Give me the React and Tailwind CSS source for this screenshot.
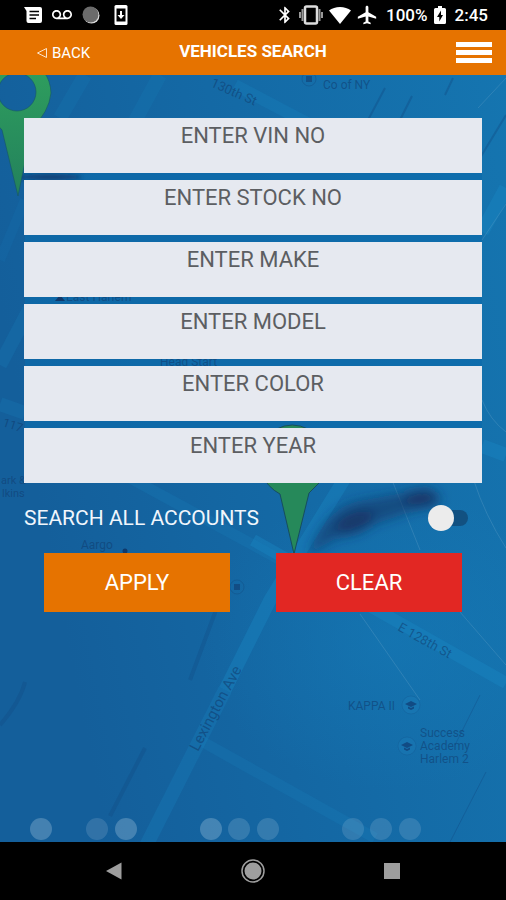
import { useState } from 'react'
import { MdVoicemail, MdBluetooth, MdVibration, MdAirplanemodeActive } from 'react-icons/md'

const FIELDS = [
  { key: 'vin', label: 'ENTER VIN NO' },
  { key: 'stock', label: 'ENTER STOCK NO' },
  { key: 'make', label: 'ENTER MAKE' },
  { key: 'model', label: 'ENTER MODEL' },
  { key: 'color', label: 'ENTER COLOR' },
  { key: 'year', label: 'ENTER YEAR' },
]

const EMPTY = { vin: '', stock: '', make: '', model: '', color: '', year: '' }

// cx + opacity of the faded dots along the bottom of the map
const DOTS = [
  [41, 0.25], [97, 0.15], [126, 0.25], [211, 0.25], [239, 0.17],
  [268, 0.17], [353, 0.15], [381, 0.15], [410, 0.15],
]

function StatusBar() {
  return (
    <div className="flex h-[30px] items-center justify-between bg-black pl-6 pr-[18px] text-white">
      <div className="flex items-center gap-[10px]">
        <svg viewBox="0 0 18 16" className="h-4 w-[18px]">
          <path fill="#fff" d="M0 0h16a2 2 0 0 1 2 2v12a2 2 0 0 1-2 2H4.500a2 2 0 0 1-2-2V4z"/>
          <path stroke="#000" strokeWidth="1.500" d="M5.500 4.600h9.500M5.500 8h9.500M5.500 11.400h6.500"/>
        </svg>
        <MdVoicemail className="h-5 w-5"/>
        <svg viewBox="0 0 18 18" className="h-[18px] w-[18px]">
          <circle cx="9.500" cy="9.500" r="8" fill="#ddd"/>
          <circle cx="8.500" cy="8.500" r="8" fill="#6b6b6b"/>
        </svg>
        <svg viewBox="0 0 14 20" className="ml-1 h-5 w-[14px]">
          <rect x="0.500" width="13" height="20" rx="1.500" fill="#fff"/>
          <rect x="2.500" y="3.500" width="9" height="13" fill="#000"/>
          <path fill="#fff" d="M6 6h2v4h2.500L7 14l-3.500-4H6z"/>
        </svg>
      </div>
      <div className="flex items-center">
        <MdBluetooth className="h-5 w-5"/>
        <svg viewBox="0 0 24 20" className="ml-1 h-5 w-6">
          <rect x="6" y="1.500" width="12" height="17" rx="1.500" fill="none" stroke="#ddd" strokeWidth="2.500"/>
          <path d="M3.500 4v12M20.500 4v12M1 7v6M23 7v6" stroke="#999" strokeWidth="2"/>
        </svg>
        <svg viewBox="0 0 22 17" className="ml-[6px] h-[17px] w-[22px]">
          <path fill="#fff" d="M11 17 0 3.500C3 1.200 6.800 0 11 0s8 1.200 11 3.500z"/>
        </svg>
        <MdAirplanemodeActive className="ml-[5px] h-[22px] w-[22px]"/>
        <span className="ml-2 text-[17px] font-medium leading-5">100%</span>
        <svg viewBox="0 0 12 18" className="ml-[6px] h-[18px] w-3">
          <path fill="#fff" d="M4 0h4v2h2.500A1.500 1.500 0 0 1 12 3.500v13a1.500 1.500 0 0 1-1.500 1.500h-9A1.500 1.500 0 0 1 0 16.500v-13A1.500 1.500 0 0 1 1.500 2H4z"/>
          <path fill="#000" d="M7 4.500 3 11h2.300v4.500L9 9H7z"/>
        </svg>
        <span className="ml-[9px] text-[17px] font-medium leading-5">2:45</span>
      </div>
    </div>
  )
}

function Header() {
  return (
    <header className="relative z-10 grid h-[45px] grid-cols-[1fr_auto_1fr] items-center bg-[#e67300] px-[14px] text-white">
      <button className="ml-[22px] flex items-center gap-1 justify-self-start text-[15px] leading-5">
        <svg viewBox="0 0 12 12" className="h-3 w-3">
          <path d="M10.500 1.500v9L1.500 6z" fill="none" stroke="#fff" strokeOpacity="0.800"/>
        </svg>
        BACK
      </button>
      <h1 className="pb-1 text-[17px] font-bold leading-5">VEHICLES SEARCH</h1>
      <button aria-label="Menu" className="flex w-9 flex-col gap-[3px] justify-self-end">
        <span className="h-[5px] bg-white"/>
        <span className="h-[5px] bg-white"/>
        <span className="h-[5px] bg-white"/>
      </button>
    </header>
  )
}

function School({ x, y }) {
  return (
    <g transform={`translate(${x} ${y})`}>
      <circle r="9" fill="#1c7fbb" fillOpacity="0.350" stroke="#124f86" strokeOpacity="0.250"/>
      <path d="M-6-1 0-4 6-1 0 2zM-3 1.500v2L0 5l3-1.500v-2L0 3z" fill="#10447c" fillOpacity="0.850"/>
    </g>
  )
}

function MapBackground() {
  return (
    <svg viewBox="0 75 506 767" preserveAspectRatio="xMidYMid slice" aria-hidden="true" className="absolute inset-0 h-full w-full">
      <defs>
        <linearGradient id="sea" x1="0" y1="0.300" x2="1" y2="0">
          <stop offset="0" stopColor="#145f9b"/>
          <stop offset="0.500" stopColor="#146aa6"/>
          <stop offset="1" stopColor="#1575b0"/>
        </linearGradient>
        <linearGradient id="pin" x1="0" y1="0" x2="0" y2="1">
          <stop offset="0" stopColor="#2fa05e"/>
          <stop offset="1" stopColor="#23815c"/>
        </linearGradient>
        <radialGradient id="glow">
          <stop offset="0" stopColor="#1580bd" stopOpacity="0.400"/>
          <stop offset="1" stopColor="#1580bd" stopOpacity="0"/>
        </radialGradient>
        <filter id="soft" x="-40%" y="-120%" width="180%" height="340%">
          <feGaussianBlur stdDeviation="6"/>
        </filter>
        <filter id="haze" x="-30%" y="-100%" width="160%" height="300%">
          <feGaussianBlur stdDeviation="2"/>
        </filter>
      </defs>
      <rect y="75" width="506" height="767" fill="url(#sea)"/>
      <ellipse cx="390" cy="640" rx="190" ry="150" fill="url(#glow)"/>
      <rect x="25" y="160" width="457" height="290" fill="#0c6bab" fillOpacity="0.700"/>

      {/* streets */}
      <g fill="none" stroke="#1886c3" strokeOpacity="0.400">
        <path strokeWidth="13" d="M345 478 270 600 225 690"/>
        <path strokeWidth="14" d="M225 690 145 848" strokeOpacity="0.280"/>
        <path strokeWidth="12" d="M253 540 506 683"/>
        <path strokeWidth="11" d="M203 742 375 838M130 478 290 565" strokeOpacity="0.200"/>
        <path strokeWidth="14" d="M506 188 482 232M482 446l24 9"/>
        <path strokeWidth="14" d="M160 75 130 130M85 75 60 118" strokeOpacity="0.160"/>
        <path strokeWidth="12" d="M235 85 330 135" strokeOpacity="0.250"/>
        <path strokeWidth="14" d="M30 308 0 365M0 404l25 9" strokeOpacity="0.200"/>
        <path strokeWidth="10" d="M0 260 25 200" strokeOpacity="0.120"/>
      </g>
      <g fill="none" stroke="#123f78" strokeOpacity="0.300" strokeWidth="2">
        <path d="M385 88 368 120M412 96 400 120M453 78 445 95M506 115 480 158"/>
        <path strokeWidth="4" d="M25 682Q20 702 0 725M145 748 110 816M216 610 190 680" strokeOpacity="0.220"/>
        <path strokeWidth="1" d="M486 772 450 842M480 695 455 745"/>
      </g>
      <g fill="none" stroke="#5f9fc6" strokeOpacity="0.350">
        <path d="M506 78 478 108M506 204 482 240M474 481Q485 515 506 548M460 612 506 665M392 480 420 550M360 614 420 700M482 400Q490 420 506 432"/>
      </g>

      {/* pin shadows */}
      <g filter="url(#soft)" fill="#16305f">
        <path d="M308 556Q325 505 365 500L430 488 438 500Q405 515 370 525T308 556z" fillOpacity="0.550"/>
        <ellipse cx="355" cy="523" rx="20" ry="10" transform="rotate(-22 355 523)" fillOpacity="0.700"/>
        <ellipse cx="422" cy="499" rx="18" ry="9" fillOpacity="0.700"/>
      </g>
      <ellipse cx="50" cy="177" rx="32" ry="3" fill="#12305f" fillOpacity="0.700" filter="url(#haze)"/>

      {/* pins */}
      <path fillRule="evenodd" fill="url(#pin)" stroke="#155566" strokeOpacity="0.600" d="M18 196 2 130Q-20 110-14 85 0 55 25 60 50 68 51 93 49 112 32 128zM17 73A19 19 0 1 0 17 111 19 19 0 1 0 17 73z"/>
      <path fill="#26895a" stroke="#174e5e" d="M294 554 280 494Q268 488 260 472A35 40 0 0 1 260 442Q292 408 325 442A35 40 0 0 1 324 478L309 493z"/>

      {/* place names */}
      <g fill="#10396b" fillOpacity="0.550" className="font-[Roboto,sans-serif] text-[12px]">
        <text transform="translate(210 86) rotate(24)" className="text-[13px]">130th St</text>
        <text x="323" y="89">Co of NY</text>
        <text x="160" y="366">Head Start</text>
        <text x="66" y="301">East Harlem</text>
        <text transform="translate(2 426) rotate(18)">117</text>
        <text x="1" y="484" className="text-[11px]">ark &amp;</text>
        <text x="2" y="497" className="text-[11px]">lkins</text>
        <text x="81" y="549">Aargo</text>
        <text transform="translate(397 630) rotate(29)" className="text-[13px]">E 128th St</text>
        <text transform="translate(198 752) rotate(-62)" className="text-[15px]">Lexington Ave</text>
        <text x="348" y="710">KAPPA II</text>
        <text x="420" y="737">Success</text>
        <text x="420" y="750">Academy</text>
        <text x="420" y="763">Harlem 2</text>
      </g>
      <circle cx="125" cy="551" r="2.500" fill="#10396b"/>
      <path d="M55 301 60 295l5 6z" fill="#10396b"/>
      <g stroke="#124f86" strokeOpacity="0.500" fill="none">
        <circle cx="309" cy="79" r="7"/>
        <circle cx="237" cy="587" r="7"/>
      </g>
      <path d="M306 76h6v6h-6zM234 584h6v6h-6z" fill="#10396b" fillOpacity="0.550"/>
      <School x={411} y={705}/>
      <School x={407} y={746}/>

      {DOTS.map(([cx, opacity])=>(
        <circle key={cx} cx={cx} cy="829" r="11" fill="#d5e6f2" fillOpacity={opacity}/>
      ))}
    </svg>
  )
}

function NavBar() {
  return (
    <nav className="relative z-10 grid h-[58px] grid-cols-3 items-center bg-black px-11 text-[#9e9e9e]">
      <button aria-label="Back" className="justify-self-center">
        <svg viewBox="0 0 16 18" className="h-[18px] w-4">
          <path d="M15.500 0.500v17L0 9z" fill="currentColor"/>
        </svg>
      </button>
      <button aria-label="Home" className="justify-self-center">
        <svg viewBox="0 0 24 24" className="h-6 w-6">
          <circle cx="12" cy="12" r="11" fill="none" stroke="currentColor" strokeWidth="1.500"/>
          <circle cx="12" cy="12" r="8.500" fill="currentColor"/>
        </svg>
      </button>
      <button aria-label="Recent apps" className="h-4 w-4 justify-self-center bg-[#9e9e9e]"/>
    </nav>
  )
}

export default function App() {
  const [values, setValues] = useState(EMPTY)
  const [allAccounts, setAllAccounts] = useState(false)

  function handleClear() {
    setValues(EMPTY)
    setAllAccounts(false)
  }

  return (
    <div className="flex min-h-screen flex-col font-[Roboto,sans-serif]">
      <StatusBar/>
      <Header/>
      <main className="relative flex-1 overflow-hidden bg-[#146aa6]">
        <MapBackground/>
        <form onSubmit={e=>e.preventDefault()} className="relative px-6 pb-10 pt-[43px]">
          <div className="flex flex-col gap-[7px]">
            {FIELDS.map(f=>(
              <input key={f.key} type="text" aria-label={f.label} placeholder={f.label}
                value={values[f.key]}
                onChange={e=>setValues({ ...values, [f.key]: e.target.value })}
                className="h-[55px] w-full bg-[#e6e9f0] pb-5 text-center text-[22px] text-gray-800 outline-none placeholder:text-[#5c5e62]"/>
            ))}
          </div>

          <label className="mt-[22px] flex items-center justify-between pr-[14px] text-[21px] leading-[26px] text-[#f0f6fc]">
            SEARCH ALL ACCOUNTS
            <input type="checkbox" role="switch" checked={allAccounts}
              onChange={e=>setAllAccounts(e.target.checked)}
              className="flex h-4 w-10 appearance-none items-center rounded-full bg-[#125181] before:h-[26px] before:w-[26px] before:shrink-0 before:rounded-full before:bg-[#ececec] checked:justify-end"/>
          </label>

          <div className="mt-[22px] grid grid-cols-2 gap-[46px] px-5">
            <button type="submit" className="h-[59px] bg-[#e67300] text-[22px] text-white">APPLY</button>
            <button type="button" onClick={handleClear} className="h-[59px] bg-[#e22723] text-[22px] text-white">CLEAR</button>
          </div>
        </form>
      </main>
      <NavBar/>
    </div>
  )
}
